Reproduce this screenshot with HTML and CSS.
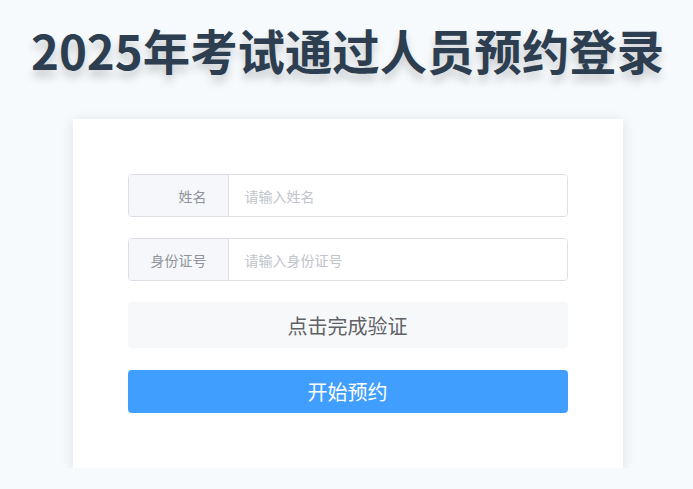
FILE: index.html
```html
<!DOCTYPE html>
<html>
<head>
  <meta charset="UTF-8">
  <meta name="viewport" content="width=device-width, initial-scale=1.0">
  <title>预约登录</title>
  <link rel="stylesheet" href="styles.css">
</head>
<body>
  <main class="page">
    <h1 class="title">2025年考试通过人员预约登录</h1>

    <section class="card">
      <div class="field">
        <span class="field-label">姓名</span>
        <input class="field-input" type="text" placeholder="请输入姓名">
      </div>

      <div class="field">
        <span class="field-label">身份证号</span>
        <input class="field-input" type="text" placeholder="请输入身份证号">
      </div>

      <div class="verify">点击完成验证</div>

      <button class="btn-submit">开始预约</button>
    </section>
  </main>
</body>
</html>
```

FILE: styles.css
```css
* {
  box-sizing: border-box;
}

body {
  margin: 0;
  background-color: #f7fafd;
  font-family: "Noto Sans CJK SC", "Noto Sans", sans-serif;
}

.page {
  display: flex;
  flex-direction: column;
  align-items: center;
  padding-left: 2px;
}

.title {
  margin: 16px 0 0;
  height: 103px;
  font-size: 47.4px;
  font-weight: 700;
  line-height: 68px;
  color: #2c3e50;
  text-shadow: 0 7px 8px rgba(0, 0, 0, 0.18);
}

.card {
  display: flex;
  flex-direction: column;
  gap: 21px;

  width: 550px;
  padding: 55px;

  background-color: #fff;
  box-shadow: 0 2px 12px rgba(0, 0, 0, 0.1);
}

.field {
  display: flex;
  height: 43px;
  border: 1px solid #dcdfe6;
  border-radius: 4px;
  overflow: hidden;
}

.field-label {
  display: flex;
  align-items: center;
  justify-content: flex-end;

  width: 100px;
  padding-right: 21px;

  background-color: #f5f7fa;
  border-right: 1px solid #dcdfe6;

  font-size: 14px;
  color: #909399;
}

.field-input {
  flex: 1;
  border: none;
  outline: none;
  padding: 0 16px;
  font-family: inherit;
  font-size: 14px;
  color: #606266;
}

.field-input::placeholder {
  color: #c0c4cc;
}

.verify {
  display: flex;
  align-items: center;
  justify-content: center;

  height: 46px;

  background-color: #f7f8fa;
  border-radius: 4px;

  font-size: 20px;
  color: #606266;
}

.btn-submit {
  height: 43px;
  margin-top: 1px;
  border: none;
  border-radius: 4px;

  background-color: #409eff;
  color: #fff;

  font-family: inherit;
  font-size: 20px;
  cursor: pointer;
}
```
